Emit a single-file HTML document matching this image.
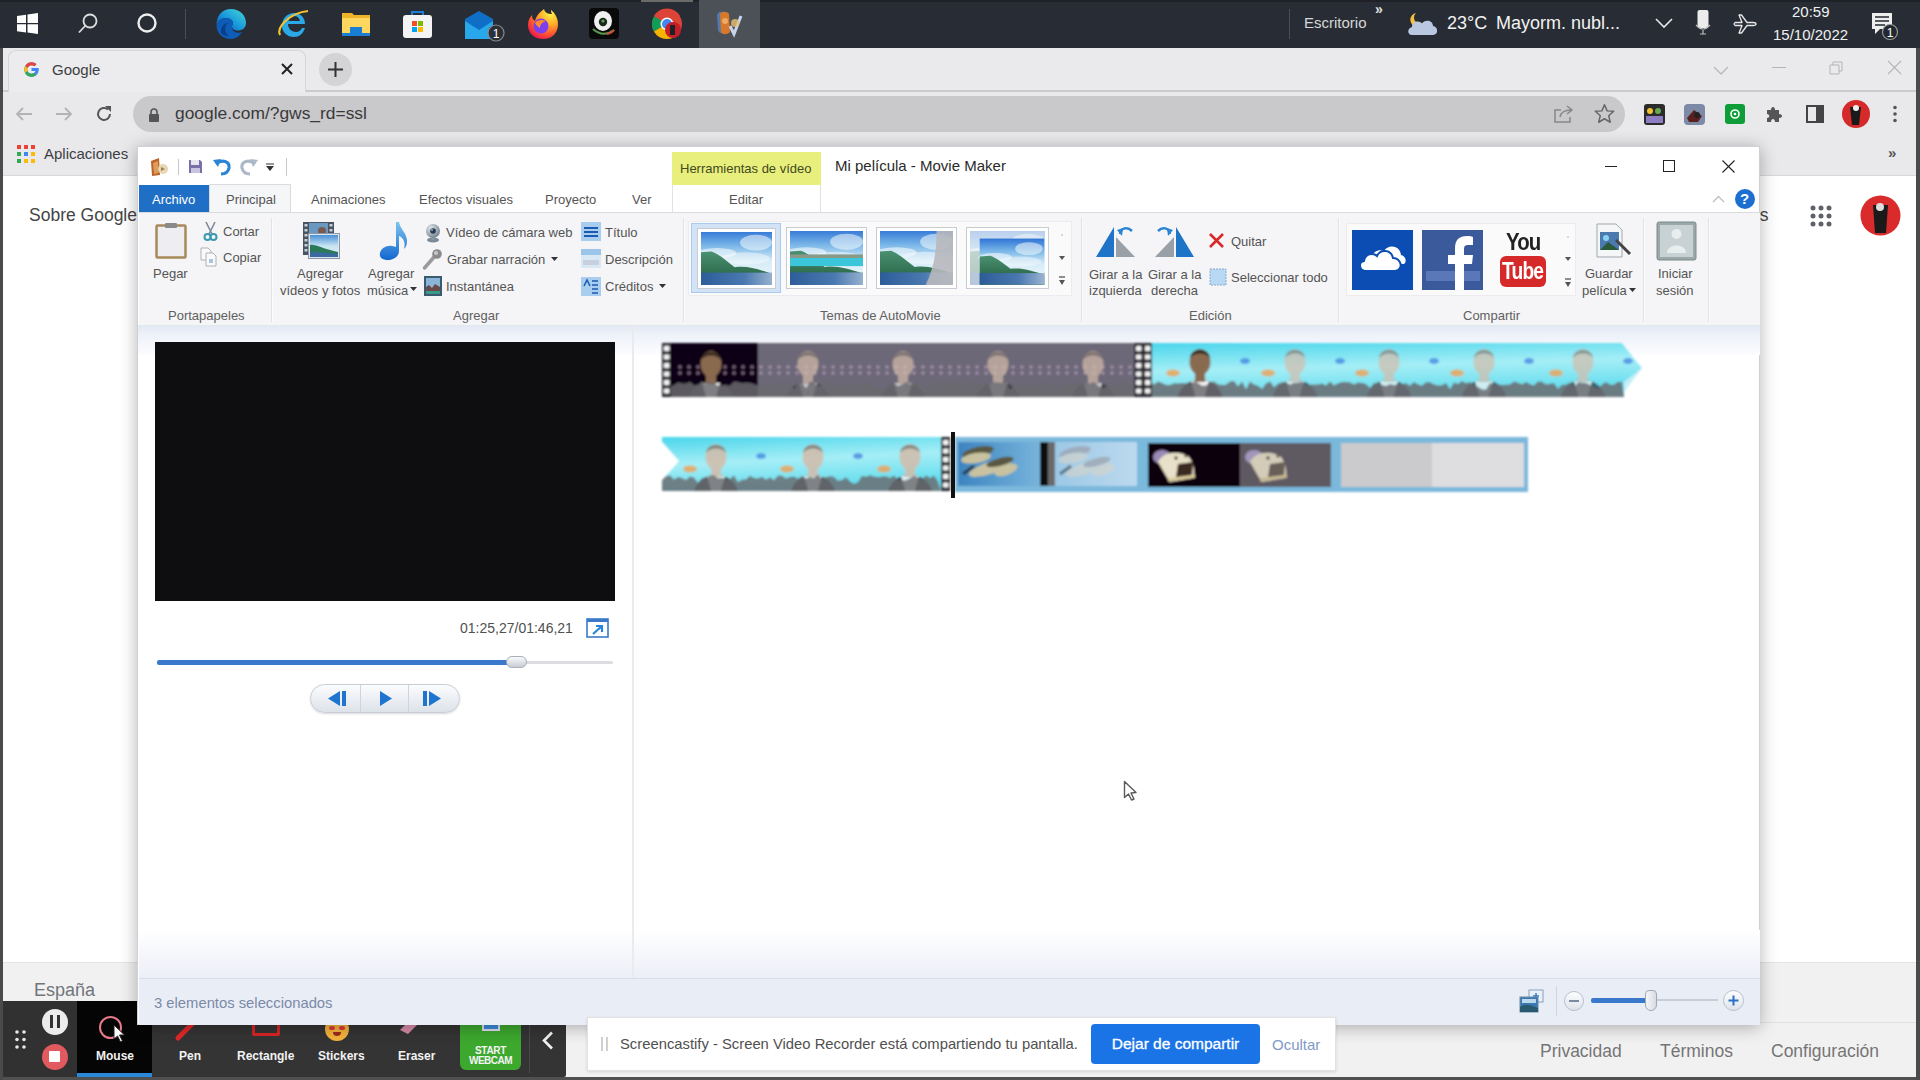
<!DOCTYPE html>
<html><head><meta charset="utf-8">
<style>
*{margin:0;padding:0;box-sizing:border-box}
html,body{width:1920px;height:1080px;overflow:hidden;background:#fff;font-family:"Liberation Sans",sans-serif;position:relative}
.a{position:absolute}
.t{position:absolute;white-space:nowrap;line-height:1}
svg{position:absolute;overflow:visible}
#tb{left:0;top:0;width:1920px;height:48px;background:#282d35}
#tabs{left:0;top:48px;width:1920px;height:44px;background:#eae9ec;border-bottom:2px solid #cbcacd}
#tool{left:0;top:92px;width:1920px;height:44px;background:#e9e8eb}
#bm{left:0;top:136px;width:1920px;height:40px;background:#e9e8eb;border-bottom:1px solid #d8d8da}
#page{left:0;top:176px;width:1920px;height:904px;background:#fff}
#foot{left:0;top:962px;width:1920px;height:118px;background:#f2f1f2;border-top:1px solid #e4e4e4}
#mm{left:137px;top:146px;width:1623px;height:879px;border:1px solid #d0d0d4;background:#fff;box-shadow:0 2px 16px rgba(0,0,0,.30)}
.th{background:linear-gradient(#2a70c8 0%,#7ab8e8 18%,#d8ecf8 38%,#c8e4f0 48%,#3a8a60 58%,#2a6a58 68%,#3a78b8 78%,#6aa0d0 90%,#a8c8e8 100%);border:3px solid #fff;box-shadow:0 0 0 1px #c8ccd2}
.rb{font-family:"Liberation Sans",sans-serif;font-size:12.5px;color:#505050}
.rb[style*="color:#444"]{color:#545454 !important}
</style></head><body>
<!-- google page -->
<div id="page" class="a"></div>
<div class="t" style="left:29px;top:207px;font-size:17.5px;color:#454545">Sobre Google</div>
<div class="t" style="left:1750px;top:207px;font-size:17.5px;color:#454545">es</div>
<div id="foot" class="a"></div>
<div class="a" style="left:0;top:1022px;width:1920px;height:1px;background:#e0e0e0"></div>
<div class="t" style="left:34px;top:981px;font-size:18px;color:#70757a">España</div>
<div class="t" style="left:1540px;top:1043px;font-size:17.5px;color:#757575">Privacidad</div>
<div class="t" style="left:1660px;top:1043px;font-size:17.5px;color:#757575">Términos</div>
<div class="t" style="left:1771px;top:1043px;font-size:17.5px;color:#757575">Configuración</div>
<!-- screen edges -->

<!-- TASKBAR -->
<div id="tb" class="a">
  <div class="a" style="left:0;top:0;width:1920px;height:2px;background:#1e2228"></div>
  <div class="a" style="left:699px;top:0;width:61px;height:48px;background:#4c5158"></div><div class="a" style="left:641px;top:0;width:52px;height:2px;background:#6a6a6a"></div>
  <!-- win logo -->
  <svg style="left:17px;top:13px" width="21" height="21" viewBox="0 0 21 21"><path d="M0 3 L9 1.7 V10 H0Z M10.5 1.5 L21 0 V10 H10.5Z M0 11.2 H9 V19.5 L0 18.2Z M10.5 11.2 H21 V21 L10.5 19.6Z" fill="#fff"/></svg>
  <!-- search -->
  <svg style="left:76px;top:11px" width="24" height="24" viewBox="0 0 24 24"><circle cx="14" cy="10" r="6.5" fill="none" stroke="#ddd" stroke-width="1.8"/><path d="M9.5 14.5 L3 21.5" stroke="#ddd" stroke-width="1.8"/></svg>
  <!-- cortana -->
  <svg style="left:136px;top:12px" width="22" height="22" viewBox="0 0 22 22"><circle cx="11" cy="11" r="8.5" fill="none" stroke="#eee" stroke-width="2.4"/></svg>
  <div class="a" style="left:185px;top:9px;width:1px;height:30px;background:#4a4f57"></div>
  <!-- edge -->
  <svg style="left:215px;top:8px" width="32" height="32" viewBox="0 0 32 32"><defs><linearGradient id="eg" x1="0" y1="1" x2="1" y2="0"><stop offset="0" stop-color="#0a4ea0"/><stop offset=".45" stop-color="#1796dc"/><stop offset=".8" stop-color="#35c1d8"/><stop offset="1" stop-color="#5ed68a"/></linearGradient></defs><path d="M16 1 C25 1 31 7.5 31 15 C31 20 27 22.5 23 22.5 C19 22.5 17 20.5 17 18.5 C17 17 18 16.5 18 15 C18 12 14 10 11 10 C6 10 2 14 1.5 18 C1 8 7 1 16 1Z" fill="url(#eg)"/><path d="M1.5 18 C2 14 6 10 11 10 C14 10 18 12 18 15 C18 16.5 17 17 17 18.5 C17 23 21 26 27 24 C24 29 20 31 16 31 C8 31 2 26 1.5 18Z" fill="#0c5cb8"/><path d="M6 24 C6 19 9 15 13 15 C9 18 9 24 14 28 C10 28 6 26 6 24Z" fill="#0a3f86"/></svg>
  <!-- IE -->
  <svg style="left:276px;top:7px" width="34" height="34" viewBox="0 0 34 34"><path d="M6 19 C6 11 12 6 18 6 C25 6 29 11 29 17 L12 17 C12 22 16 25 20 25 C23 25 25 23 26 21 L29 21 C27 27 23 30 18 30 C11 30 6 25 6 19Z M12.5 14 L24 14 C23 10 20.5 9 18 9 C15 9 13 11 12.5 14Z" fill="#2aa8e8"/><path d="M4 28 C0 20 14 6 32 4" fill="none" stroke="#f5c22c" stroke-width="2.2"/></svg>
  <!-- explorer -->
  <svg style="left:341px;top:10px" width="30" height="28" viewBox="0 0 30 28"><path d="M1 3 H11 L13 5 H29 V25 H1Z" fill="#f0b429"/><path d="M1 8 H29 V25 H1Z" fill="#ffd75e"/><rect x="9" y="17" width="12" height="6" fill="#1a7fd4"/><rect x="1" y="23" width="28" height="3" fill="#1a7fd4"/></svg>
  <!-- store -->
  <svg style="left:402px;top:8px" width="31" height="31" viewBox="0 0 31 31"><path d="M10 7 V4 H21 V7" fill="none" stroke="#1e7fd8" stroke-width="2"/><rect x="1" y="7" width="29" height="23" rx="3" fill="#f4f4f4"/><rect x="10" y="13" width="5" height="5" fill="#f25022"/><rect x="16" y="13" width="5" height="5" fill="#7fba00"/><rect x="10" y="19" width="5" height="5" fill="#00a4ef"/><rect x="16" y="19" width="5" height="5" fill="#ffb900"/></svg>
  <!-- mail -->
  <svg style="left:463px;top:9px" width="44" height="36" viewBox="0 0 44 36"><path d="M2 10 L16 2 L30 10 V30 H2Z" fill="#0f6fc6"/><path d="M2 12 L16 21 L30 12 V30 H2Z" fill="#28a8ea"/><circle cx="33" cy="24" r="8" fill="#2b2f36" stroke="#888" stroke-width="1.2"/><text x="33" y="29" font-size="12" fill="#fff" text-anchor="middle" style="font-family:'Liberation Sans'">1</text></svg>
  <!-- firefox -->
  <svg style="left:527px;top:8px" width="32" height="32" viewBox="0 0 32 32"><defs><radialGradient id="ff" cx=".75" cy=".15" r=".95"><stop offset="0" stop-color="#fff14a"/><stop offset=".35" stop-color="#ffb42a"/><stop offset=".7" stop-color="#ff5a2e"/><stop offset="1" stop-color="#e8174f"/></radialGradient></defs><path d="M16 31 C7 31 1 25 1 17 C1 12 3 9 5 7 C5 10 6 12 8 13 C9 8 13 4 17 1 C18 5 21 6 25 6 C24 4 24 3 24 2 C28 5 31 10 31 16 C31 25 25 31 16 31Z" fill="url(#ff)"/><circle cx="14" cy="18" r="7.5" fill="#7b3ff0"/><path d="M8 15 C10 12 15 11 19 13 C16 14 13 16 13 20 C11 19 9 17 8 15Z" fill="#ff8a2a"/></svg>
  <!-- webcam app -->
  <svg style="left:589px;top:8px" width="30" height="31" viewBox="0 0 30 31"><rect x="0" y="0" width="30" height="31" rx="4" fill="#0a0a0a"/><ellipse cx="14" cy="13" rx="9" ry="10" fill="#f0f0f0"/><circle cx="14" cy="14" r="4.2" fill="#1a2a1a"/><circle cx="14" cy="13" r="1.6" fill="#6aa060"/><path d="M4 21 Q14 30 25 22" stroke="#5a9a4a" stroke-width="2" fill="none"/><path d="M18 26 Q23 25 25 22" stroke="#d84a3a" stroke-width="2" fill="none"/></svg>
  <!-- chrome -->
  <svg style="left:651px;top:8px" width="32" height="32" viewBox="0 0 32 32"><circle cx="16" cy="16" r="15" fill="#db4437"/><path d="M16 16 L3 23.5 A15 15 0 0 1 3.5 8 Z" fill="#0f9d58"/><path d="M16 16 L29 23.5 A15 15 0 0 1 3 23.5Z" fill="#f4b400"/><path d="M16 16 L3 8 A15 15 0 0 1 29 8 Z" fill="#db4437"/><circle cx="16" cy="16" r="6.5" fill="#fff"/><circle cx="16" cy="16" r="5" fill="#4285f4"/><circle cx="22" cy="22" r="8" fill="#c41e2a"/><rect x="19" y="17" width="5" height="10" fill="#222"/></svg>
  <!-- movie maker -->
  <svg style="left:712px;top:8px" width="34" height="32" viewBox="0 0 34 32"><path d="M5 8 C5 4 9 3 12 4 L14 24 C11 26 7 26 6 22Z" fill="#5a8ad0" opacity=".7"/><path d="M8 6 C10 3 15 3 17 6 L18 24 C15 27 10 27 9 24Z" fill="#d8782a"/><circle cx="13" cy="13" r="3" fill="#f0a860"/><path d="M18 18 L22 26 L29 8" fill="none" stroke="#c8d4e8" stroke-width="3"/><circle cx="23" cy="15" r="4" fill="#e8c070" opacity=".8"/></svg>
  
  <!-- right side -->
  <div class="a" style="left:1289px;top:9px;width:1px;height:30px;background:#4a4f57"></div>
  <div class="t" style="left:1304px;top:15px;font-size:15px;color:#d7d7d7">Escritorio</div>
  <div class="t" style="left:1375px;top:2px;font-size:14px;color:#e0e0e0;font-weight:bold">»</div>
  <svg style="left:1406px;top:9px" width="34" height="30" viewBox="0 0 34 30"><path d="M10 4 A7 7 0 1 0 18 13 A6 6 0 0 1 10 4Z" fill="#f6c23e"/><path d="M6 26 C1 26 1 19 6 18 C6 12 14 11 16 15 C18 10 27 11 27 17 C32 17 33 26 27 26Z" fill="#b9c8e0"/></svg>
  <div class="t" style="left:1447px;top:14px;font-size:18px;color:#f2f2f2">23°C</div>
  <div class="t" style="left:1496px;top:14px;font-size:18px;color:#f2f2f2">Mayorm. nubl...</div>
  <svg style="left:1655px;top:17px" width="18" height="12" viewBox="0 0 18 12"><path d="M1 2 L9 10 L17 2" fill="none" stroke="#e6e6e6" stroke-width="1.6"/></svg>
  <svg style="left:1695px;top:9px" width="16" height="26" viewBox="0 0 16 26"><rect x="2.5" y="1" width="11" height="18" rx="2" fill="#ececec"/><path d="M1 16 Q8 24 15 16 M8 21 V25 M5 25 H11" stroke="#bbb" stroke-width="1.2" fill="none"/></svg>
  <svg style="left:1733px;top:12px" width="24" height="24" viewBox="0 0 24 24"><path d="M2 10.5 L9 10.5 L6 3 L8.5 3 L14 10.5 L20 10.5 C22 10.5 23 11.2 23 12 C23 12.8 22 13.5 20 13.5 L14 13.5 L8.5 21 L6 21 L9 13.5 L2 13.5 L1 12Z" fill="none" stroke="#e8e8e8" stroke-width="1.3" stroke-linejoin="round"/></svg>
  <div class="t" style="left:1792px;top:4px;font-size:15px;color:#f0f0f0">20:59</div>
  <div class="t" style="left:1773px;top:27px;font-size:15px;color:#f0f0f0">15/10/2022</div>
  <svg style="left:1870px;top:12px" width="34" height="30" viewBox="0 0 34 30"><path d="M2 1 H22 V17 H10 L5 22 V17 H2Z" fill="#eee"/><path d="M5 5 H19 M5 9 H19 M5 13 H15" stroke="#222831" stroke-width="1.5"/><circle cx="20" cy="20" r="7.5" fill="#222831" stroke="#999" stroke-width="1.2"/><text x="20" y="25" font-size="12" fill="#fff" text-anchor="middle" style="font-family:'Liberation Sans'">1</text></svg>
</div>

<!-- CHROME -->
<div id="tabs" class="a">
  <div class="a" style="left:8px;top:2px;width:298px;height:44px;background:#ecebee;border-radius:8px 8px 0 0;border:1px solid #d6d5d8;border-bottom:none"></div>
  <svg style="left:23px;top:13px" width="17" height="17" viewBox="0 0 48 48"><path d="M43.6 20H24v8.5h11.2C34 33 29.6 36 24 36c-6.6 0-12-5.4-12-12s5.4-12 12-12c3 0 5.8 1.1 7.9 3l6-6C34.2 5.5 29.3 3.5 24 3.5 12.7 3.5 3.5 12.7 3.5 24S12.7 44.5 24 44.5 44.5 36 44.5 24c0-1.4-.1-2.7-.4-4z" fill="#4285f4"/><path d="M6.3 14.7l7 5.1C15.1 15.2 19.2 12 24 12c3 0 5.8 1.1 7.9 3l6-6C34.2 5.5 29.3 3.5 24 3.5c-7.8 0-14.6 4.4-17.7 11.2z" fill="#ea4335"/><path d="M24 44.5c5.2 0 10-2 13.6-5.2l-6.6-5.4C29 35.2 26.6 36 24 36c-5.6 0-10-3-11.2-7.5l-7 5.4C9 40 16 44.5 24 44.5z" fill="#34a853"/><path d="M6 33.5C4.4 30.5 3.5 27.3 3.5 24s.9-6.5 2.8-9.3l7 5.1C12.5 21 12 22.5 12 24s.5 3 1.2 4.4z" fill="#fbbc05"/></svg>
  <div class="t" style="left:52px;top:14px;font-size:15px;color:#3c4043">Google</div>
  <svg style="left:281px;top:15px" width="12" height="12" viewBox="0 0 12 12"><path d="M1 1 L11 11 M11 1 L1 11" stroke="#222" stroke-width="2"/></svg>
  <div class="a" style="left:319px;top:5px;width:33px;height:33px;border-radius:50%;background:#d4d3d6"></div>
  <svg style="left:327px;top:13px" width="17" height="17" viewBox="0 0 17 17"><path d="M8.5 1 V16 M1 8.5 H16" stroke="#333" stroke-width="2"/></svg>
  <svg style="left:1713px;top:18px" width="16" height="9" viewBox="0 0 16 9"><path d="M1 1 L8 8 L15 1" fill="none" stroke="#b8b8b8" stroke-width="1.3"/></svg>
  <div class="a" style="left:1772px;top:19px;width:14px;height:1px;background:#b5b5b5"></div>
  <svg style="left:1829px;top:13px" width="14" height="14" viewBox="0 0 14 14"><path d="M1 4 H10 V13 H1Z M4 4 V1 H13 V10 H10" fill="none" stroke="#b5b5b5" stroke-width="1"/></svg>
  <svg style="left:1887px;top:12px" width="15" height="15" viewBox="0 0 15 15"><path d="M1 1 L14 14 M14 1 L1 14" stroke="#b5b5b5" stroke-width="1.1"/></svg>
</div>
<div id="tool" class="a">
  <svg style="left:15px;top:14px" width="18" height="16" viewBox="0 0 18 16"><path d="M17 8 H2 M8 2 L2 8 L8 14" fill="none" stroke="#b3b3b3" stroke-width="1.8"/></svg>
  <svg style="left:55px;top:14px" width="18" height="16" viewBox="0 0 18 16"><path d="M1 8 H16 M10 2 L16 8 L10 14" fill="none" stroke="#b3b3b3" stroke-width="1.8"/></svg>
  <svg style="left:95px;top:13px" width="18" height="18" viewBox="0 0 18 18"><path d="M15 9 A6 6 0 1 1 13 4.5" fill="none" stroke="#555" stroke-width="2"/><path d="M10 1 H16 V7Z" fill="#555"/></svg>
  <div class="a" style="left:133px;top:4px;width:1492px;height:36px;border-radius:18px;background:#c9c8cb"></div>
  <svg style="left:148px;top:16px" width="12" height="14" viewBox="0 0 12 14"><path d="M3 6 V4 A3 3 0 0 1 9 4 V6" fill="none" stroke="#555" stroke-width="1.6"/><rect x="1" y="6" width="10" height="8" rx="1" fill="#555"/></svg>
  <div class="t" style="left:175px;top:13px;font-size:17.4px;color:#3a3a3a">google.com/?gws_rd=ssl</div>
  <svg style="left:1553px;top:12px" width="22" height="20" viewBox="0 0 22 20"><path d="M8 6 H2 V18 H17 V13" fill="none" stroke="#888" stroke-width="1.5"/><path d="M7 13 C8 8 12 6 18 6 M14 2 L19 6 L14 10" fill="none" stroke="#888" stroke-width="1.5"/></svg>
  <svg style="left:1594px;top:11px" width="21" height="21" viewBox="0 0 24 24"><path d="M12 2 L15 9 L22.5 9.5 L16.8 14.5 L18.6 22 L12 18 L5.4 22 L7.2 14.5 L1.5 9.5 L9 9Z" fill="none" stroke="#666" stroke-width="1.7" stroke-linejoin="round"/></svg>
  <!-- extensions -->
  <svg style="left:1644px;top:12px" width="21" height="21" viewBox="0 0 21 21"><rect width="21" height="21" rx="3" fill="#2b2b2b"/><circle cx="6" cy="7" r="3" fill="#f1c232"/><circle cx="14" cy="7" r="3" fill="#6aa84f"/><rect x="2" y="12" width="17" height="7" fill="#8e7cc3"/></svg>
  <svg style="left:1684px;top:12px" width="21" height="21" viewBox="0 0 21 21"><rect width="21" height="21" rx="4" fill="#7d8aa5"/><path d="M3 14 L10 6 L18 12 L14 18 L5 18Z" fill="#5a2020"/><circle cx="13" cy="11" r="3" fill="#222"/></svg>
  <svg style="left:1725px;top:12px" width="20" height="20" viewBox="0 0 20 20"><rect width="20" height="20" rx="3" fill="#0f9d3a"/><circle cx="10" cy="10" r="4" fill="none" stroke="#fff" stroke-width="1.6"/><circle cx="10" cy="10" r="1.3" fill="#fff"/></svg>
  <svg style="left:1765px;top:12px" width="20" height="20" viewBox="0 0 20 20"><path d="M2 6 H6 C6 2 10 2 10 6 H14 V10 C18 10 18 14 14 14 V18 H10 C10 14 6 14 6 18 H2 V14 C5 14 5 10 2 10Z" fill="#555"/></svg>
  <svg style="left:1806px;top:13px" width="18" height="18" viewBox="0 0 18 18"><rect x="1" y="1" width="16" height="16" fill="none" stroke="#444" stroke-width="2"/><rect x="10" y="1" width="7" height="16" fill="#444"/></svg>
  <svg style="left:1841px;top:7px" width="30" height="30" viewBox="0 0 30 30"><circle cx="15" cy="15" r="14" fill="#d62a2a"/><path d="M9 8 H20 L18 26 H11Z" fill="#1a1a1a"/><circle cx="15" cy="9" r="3" fill="#eee"/></svg>
  <svg style="left:1892px;top:13px" width="6" height="18" viewBox="0 0 6 18"><circle cx="3" cy="2.5" r="1.8" fill="#555"/><circle cx="3" cy="9" r="1.8" fill="#555"/><circle cx="3" cy="15.5" r="1.8" fill="#555"/></svg>
</div>
<div id="bm" class="a">
  <svg style="left:17px;top:9px" width="18" height="18" viewBox="0 0 18 18"><rect x="0" y="0" width="4" height="4" fill="#ea4335"/><rect x="7" y="0" width="4" height="4" fill="#ea4335"/><rect x="14" y="0" width="4" height="4" fill="#ea4335"/><rect x="0" y="7" width="4" height="4" fill="#34a853"/><rect x="7" y="7" width="4" height="4" fill="#4285f4"/><rect x="14" y="7" width="4" height="4" fill="#fbbc05"/><rect x="0" y="14" width="4" height="4" fill="#34a853"/><rect x="7" y="14" width="4" height="4" fill="#fbbc05"/><rect x="14" y="14" width="4" height="4" fill="#fbbc05"/></svg>
  <div class="t" style="left:44px;top:10px;font-size:15px;color:#3c4043">Aplicaciones</div>
  <div class="t" style="left:1888px;top:9px;font-size:15px;color:#555;font-weight:bold">»</div>
</div>
<!-- google header icons right -->
<svg style="left:1810px;top:205px" width="22" height="22" viewBox="0 0 22 22"><g fill="#5f6368"><circle cx="3" cy="3" r="2.5"/><circle cx="11" cy="3" r="2.5"/><circle cx="19" cy="3" r="2.5"/><circle cx="3" cy="11" r="2.5"/><circle cx="11" cy="11" r="2.5"/><circle cx="19" cy="11" r="2.5"/><circle cx="3" cy="19" r="2.5"/><circle cx="11" cy="19" r="2.5"/><circle cx="19" cy="19" r="2.5"/></g></svg>
<svg style="left:1860px;top:195px" width="41" height="41" viewBox="0 0 41 41"><circle cx="20.5" cy="20.5" r="20" fill="#d92b2b"/><path d="M13 10 H28 L26 38 H15Z" fill="#1a1a1a"/><circle cx="20" cy="12" r="4" fill="#ddd"/></svg>


<!-- screencastify toolbar -->
<div class="a" style="left:3px;top:1001px;width:563px;height:76px;background:#343434;border-radius:2px"></div>
<div class="a" style="left:3px;top:1001px;width:74px;height:76px;background:#313131"></div>
<svg style="left:14px;top:1029px" width="14" height="22" viewBox="0 0 14 22"><g fill="#e8e8e8"><circle cx="3" cy="3" r="1.8"/><circle cx="10" cy="3" r="1.8"/><circle cx="3" cy="10.5" r="1.8"/><circle cx="10" cy="10.5" r="1.8"/><circle cx="3" cy="18" r="1.8"/><circle cx="10" cy="18" r="1.8"/></g></svg>
<div class="a" style="left:42px;top:1009px;width:26px;height:26px;border-radius:50%;background:#ececec"></div>
<div class="a" style="left:50px;top:1015px;width:3px;height:13px;background:#333"></div>
<div class="a" style="left:57px;top:1015px;width:3px;height:13px;background:#333"></div>
<div class="a" style="left:42px;top:1044px;width:26px;height:26px;border-radius:50%;background:#e05a5f"></div>
<div class="a" style="left:49px;top:1051px;width:11px;height:11px;background:#fff;border-radius:1px"></div>
<div class="a" style="left:77px;top:1001px;width:75px;height:76px;background:#050505"></div>
<div class="a" style="left:77px;top:1073px;width:75px;height:4px;background:#2a88d8"></div>
<div class="a" style="left:99px;top:1016px;width:23px;height:23px;border-radius:50%;border:2.5px solid #e87a8a"></div>
<svg style="left:113px;top:1024px" width="13" height="19" viewBox="0 0 13 19"><path d="M1 1 L1 15 L4.5 12 L7.5 18 L9.5 17 L6.5 11 L11.5 11Z" fill="#fff" stroke="#222" stroke-width="1"/></svg>
<div class="t" style="left:96px;top:1050px;font-size:12px;font-weight:bold;color:#f2f2f2">Mouse</div>
<svg style="left:175px;top:1019px" width="22" height="22" viewBox="0 0 22 22"><path d="M3 19 L17 5" stroke="#e0282a" stroke-width="5" stroke-linecap="round"/></svg>
<div class="t" style="left:179px;top:1050px;font-size:12px;font-weight:bold;color:#f2f2f2">Pen</div>
<div class="a" style="left:252px;top:1012px;width:28px;height:24px;border:3px solid #d92424;border-radius:2px"></div>
<div class="t" style="left:237px;top:1050px;font-size:12px;font-weight:bold;color:#f2f2f2">Rectangle</div>
<div class="a" style="left:325px;top:1017px;width:24px;height:24px;border-radius:50%;background:#f4b43c"></div>
<div class="a" style="left:329px;top:1026px;width:6px;height:4px;border-radius:50%;background:#e0383a"></div><div class="a" style="left:339px;top:1026px;width:6px;height:4px;border-radius:50%;background:#e0383a"></div><div class="a" style="left:333px;top:1032px;width:8px;height:4px;border-radius:0 0 5px 5px;background:#a02a1a"></div>
<div class="t" style="left:318px;top:1050px;font-size:12px;font-weight:bold;color:#f2f2f2">Stickers</div>
<svg style="left:398px;top:1018px" width="24" height="18" viewBox="0 0 24 18"><path d="M2 12 L12 2 L20 6 L10 16Z" fill="#d88aa8"/></svg>
<div class="t" style="left:398px;top:1050px;font-size:12px;font-weight:bold;color:#f2f2f2">Eraser</div>
<div class="a" style="left:460px;top:1012px;width:61px;height:58px;border-radius:6px;background:#3da82e"></div>
<div class="a" style="left:482px;top:1017px;width:18px;height:14px;background:#3a8ad8;border:2px solid #dde"></div>
<div class="t" style="left:460px;top:1046px;width:61px;text-align:center;font-size:10px;font-weight:bold;color:#f4f4f4;letter-spacing:-.3px">START</div>
<div class="t" style="left:460px;top:1056px;width:61px;text-align:center;font-size:10px;font-weight:bold;color:#f4f4f4;letter-spacing:-.5px">WEBCAM</div>
<div class="a" style="left:529px;top:1005px;width:1px;height:68px;background:#4a4a4a"></div>
<svg style="left:541px;top:1031px" width="13" height="19" viewBox="0 0 13 19"><path d="M11 1.5 L3 9.5 L11 17.5" fill="none" stroke="#f2f2f2" stroke-width="2.6"/></svg>
<!-- MOVIE MAKER -->
<div id="mm" class="a"></div>
<!-- title bar -->
<svg style="left:149px;top:157px" width="20" height="20" viewBox="0 0 20 20"><path d="M2 4 L10 1 L11 18 L3 19Z" fill="#b8642a"/><path d="M4 6 L9 4 L9.5 16 L5 17Z" fill="#e29a5a"/><circle cx="14" cy="12" r="5" fill="#e7d6b0"/><path d="M12 10 L16 12 L12 14Z" fill="#9a8060"/></svg>
<div class="a" style="left:178px;top:159px;width:1px;height:16px;background:#c8c8c8"></div>
<svg style="left:188px;top:159px" width="15" height="15" viewBox="0 0 15 15"><path d="M1 1 H12 L14 3 V14 H1Z" fill="#7a6fa8"/><rect x="3" y="1" width="8" height="5" fill="#e8e6f0"/><rect x="3" y="9" width="9" height="5" fill="#c9c4de"/></svg>
<svg style="left:213px;top:157px" width="19" height="19" viewBox="0 0 19 19"><path d="M3 7 C9 2 17 4 16 11 C15 16 11 17 8 17" fill="none" stroke="#2b84d4" stroke-width="3.2"/><path d="M0 3 L8 2 L5 10Z" fill="#2b84d4"/></svg>
<svg style="left:239px;top:157px" width="19" height="19" viewBox="0 0 19 19"><path d="M16 7 C10 2 2 4 3 11 C4 16 8 17 11 17" fill="none" stroke="#aab8c8" stroke-width="3.2"/><path d="M19 3 L11 2 L14 10Z" fill="#aab8c8"/></svg>
<svg style="left:265px;top:162px" width="10" height="10" viewBox="0 0 10 10"><path d="M1 2 H9" stroke="#333" stroke-width="1"/><path d="M1 4 L9 4 L5 9Z" fill="#333"/></svg>
<div class="a" style="left:286px;top:158px;width:1px;height:18px;background:#c8c8c8"></div>
<div class="a" style="left:672px;top:152px;width:149px;height:33px;background:#e9ef7d"></div>
<div class="t rb" style="left:680px;top:162px;font-size:13px;color:#3f4a20">Herramientas de vídeo</div>
<div class="t" style="left:835px;top:158px;font-size:15px;color:#2b2b2b">Mi película - Movie Maker</div>
<div class="a" style="left:1605px;top:166px;width:12px;height:1px;background:#222"></div>
<div class="a" style="left:1663px;top:160px;width:12px;height:12px;border:1px solid #222"></div>
<svg style="left:1722px;top:160px" width="13" height="13" viewBox="0 0 13 13"><path d="M0.5 0.5 L12.5 12.5 M12.5 0.5 L0.5 12.5" stroke="#222" stroke-width="1.1"/></svg>

<!-- tabs row -->
<div class="a" style="left:139px;top:185px;width:70px;height:27px;background:#1f6fc6"></div>
<div class="t rb" style="left:152px;top:193px;font-size:13px;color:#fff">Archivo</div>
<div class="a" style="left:209px;top:184px;width:82px;height:29px;background:#f5f6f7;border:1px solid #dadbdc;border-bottom:none"></div>
<div class="t rb" style="left:226px;top:193px;font-size:13px;color:#444">Principal</div>
<div class="t rb" style="left:311px;top:193px;font-size:13px;color:#444">Animaciones</div>
<div class="t rb" style="left:419px;top:193px;font-size:13px;color:#444">Efectos visuales</div>
<div class="t rb" style="left:545px;top:193px;font-size:13px;color:#444">Proyecto</div>
<div class="t rb" style="left:632px;top:193px;font-size:13px;color:#444">Ver</div>
<div class="a" style="left:672px;top:185px;width:1px;height:27px;background:#e2e2e2"></div>
<div class="a" style="left:820px;top:185px;width:1px;height:27px;background:#e2e2e2"></div>
<div class="t rb" style="left:729px;top:193px;font-size:13px;color:#444">Editar</div>
<svg style="left:1712px;top:195px" width="13" height="8" viewBox="0 0 13 8"><path d="M1 7 L6.5 1.5 L12 7" fill="none" stroke="#c0c0c0" stroke-width="1.3"/></svg>
<div class="a" style="left:1735px;top:189px;width:20px;height:20px;border-radius:50%;background:#1c6fd1"></div>
<div class="t" style="left:1740px;top:191px;font-size:15px;font-weight:bold;color:#fff">?</div>
<!-- ribbon -->
<div class="a" style="left:139px;top:212px;width:1621px;height:113px;background:#f5f5f7;border-top:1px solid #dadbdc"></div>
<div class="a" style="left:138px;top:325px;width:1622px;height:30px;background:linear-gradient(#e2e8f3,#eef2f9 35%,#fdfdff)"></div>
<div class="a" style="left:271px;top:218px;width:1px;height:104px;background:#e2e2e6"></div><div class="a" style="left:272px;top:218px;width:1px;height:104px;background:#fbfbfc"></div>
<div class="a" style="left:683px;top:218px;width:1px;height:104px;background:#e2e2e6"></div><div class="a" style="left:684px;top:218px;width:1px;height:104px;background:#fbfbfc"></div>
<div class="a" style="left:1081px;top:218px;width:1px;height:104px;background:#e2e2e6"></div><div class="a" style="left:1082px;top:218px;width:1px;height:104px;background:#fbfbfc"></div>
<div class="a" style="left:1338px;top:218px;width:1px;height:104px;background:#e2e2e6"></div><div class="a" style="left:1339px;top:218px;width:1px;height:104px;background:#fbfbfc"></div>
<div class="a" style="left:1643px;top:218px;width:1px;height:104px;background:#e2e2e6"></div><div class="a" style="left:1644px;top:218px;width:1px;height:104px;background:#fbfbfc"></div>
<div class="a" style="left:1708px;top:218px;width:1px;height:104px;background:#e2e2e6"></div><div class="a" style="left:1709px;top:218px;width:1px;height:104px;background:#fbfbfc"></div>
<div class="t rb" style="left:168px;top:309px;font-size:13px;color:#606060">Portapapeles</div>
<div class="t rb" style="left:453px;top:309px;font-size:13px;color:#606060">Agregar</div>
<div class="t rb" style="left:820px;top:309px;font-size:13px;color:#606060">Temas de AutoMovie</div>
<div class="t rb" style="left:1189px;top:309px;font-size:13px;color:#606060">Edición</div>
<div class="t rb" style="left:1463px;top:309px;font-size:13px;color:#606060">Compartir</div>
<!-- portapapeles -->
<svg style="left:155px;top:222px" width="32" height="37" viewBox="0 0 32 37"><rect x="1.5" y="3.5" width="29" height="32" rx="1" fill="#eeeef2" stroke="#a88a5a" stroke-width="2.5"/><rect x="10" y="1" width="12" height="5" rx="1" fill="#8a8a8a"/></svg>
<div class="t rb" style="left:153px;top:267px;font-size:13px;color:#444">Pegar</div>
<svg style="left:203px;top:221px" width="15" height="20" viewBox="0 0 15 20"><path d="M3 1 L9 13 M12 1 L6 13" stroke="#7a8a9a" stroke-width="1.6"/><circle cx="4.5" cy="16" r="3" fill="none" stroke="#3a9ab0" stroke-width="2"/><circle cx="10.5" cy="16" r="3" fill="none" stroke="#3a9ab0" stroke-width="2"/></svg>
<div class="t rb" style="left:223px;top:225px;font-size:13px;color:#444">Cortar</div>
<svg style="left:200px;top:247px" width="18" height="20" viewBox="0 0 18 20"><path d="M1 1 H8 L11 4 V13 H1Z" fill="#fafafa" stroke="#b0b0b0"/><path d="M6 6 H13 L16 9 V19 H6Z" fill="#fafafa" stroke="#b0b0b0"/><rect x="9" y="12" width="4" height="4" fill="#a8c4e0"/></svg>
<div class="t rb" style="left:223px;top:251px;font-size:13px;color:#444">Copiar</div>
<!-- agregar -->
<svg style="left:302px;top:221px" width="38" height="38" viewBox="0 0 38 38"><rect x="1" y="1" width="31" height="33" fill="#4a5460"/><g fill="#c8d0d8"><rect x="2.5" y="3" width="3" height="2.5"/><rect x="2.5" y="8" width="3" height="2.5"/><rect x="2.5" y="13" width="3" height="2.5"/><rect x="2.5" y="18" width="3" height="2.5"/><rect x="2.5" y="23" width="3" height="2.5"/><rect x="2.5" y="28" width="3" height="2.5"/><rect x="27.5" y="3" width="3" height="2.5"/><rect x="27.5" y="8" width="3" height="2.5"/></g><rect x="7" y="2" width="19" height="12" fill="#6a98c0"/><circle cx="20" cy="10" r="4" fill="#7a5a50"/><rect x="6.5" y="12.5" width="31" height="25" fill="#dde6ee" stroke="#8a98a8"/><defs><linearGradient id="fsk" x1="0" y1="0" x2="0" y2="1"><stop offset="0" stop-color="#4a90d8"/><stop offset=".5" stop-color="#c8e4f0"/><stop offset="1" stop-color="#e0f0f4"/></linearGradient></defs><rect x="8" y="14" width="28" height="22" fill="url(#fsk)"/><path d="M8 24 C14 23 20 28 36 31 V36 H8Z" fill="#2a7a58"/><path d="M8 31 C18 31 28 32 36 33 V36 H8Z" fill="#3a6aa0"/></svg>
<div class="t rb" style="left:297px;top:267px;font-size:13px;color:#444">Agregar</div>
<div class="t rb" style="left:280px;top:284px;font-size:13px;color:#444">vídeos y fotos</div>
<svg style="left:377px;top:221px" width="32" height="40" viewBox="0 0 32 40"><defs><linearGradient id="mn" x1="0" y1="0" x2="0" y2="1"><stop offset="0" stop-color="#7ac4ee"/><stop offset="1" stop-color="#1466d0"/></linearGradient></defs><path d="M19 1 L22 1 C23 8 30 12 30 20 C30 24 29 26 27 28 C28 24 28 20 25 17 C24 16 23 15 22 15 L22 30 C22 35 17 39 11 39 C5 39 2 36 3 32 C4 27 10 24 15 25 C17 25 18 26 19 26Z" fill="url(#mn)"/></svg>
<div class="t rb" style="left:368px;top:267px;font-size:13px;color:#444">Agregar</div>
<div class="t rb" style="left:367px;top:284px;font-size:13px;color:#444">música</div>
<svg style="left:410px;top:287px" width="7" height="5" viewBox="0 0 7 5"><path d="M0 0 H7 L3.5 4Z" fill="#333"/></svg>
<svg style="left:424px;top:223px" width="18" height="20" viewBox="0 0 18 20"><defs><radialGradient id="wc" cx=".35" cy=".3" r=".8"><stop offset="0" stop-color="#e0e6ea"/><stop offset="1" stop-color="#6a7a88"/></radialGradient></defs><ellipse cx="9" cy="17" rx="6" ry="2.5" fill="#7a8a98"/><rect x="7.5" y="12" width="3" height="5" fill="#8a98a4"/><circle cx="9" cy="8" r="7" fill="url(#wc)"/><circle cx="9" cy="8" r="2.8" fill="#2a3a50"/><circle cx="8" cy="7" r="1" fill="#8ab0d0"/></svg>
<div class="t rb" style="left:446px;top:226px;font-size:13px;color:#444">Vídeo de cámara web</div>
<svg style="left:422px;top:248px" width="21" height="22" viewBox="0 0 21 22"><path d="M2.5 20 L12.5 8.5" stroke="#9a9a9a" stroke-width="3.5" stroke-linecap="round"/><circle cx="15" cy="6" r="4.8" fill="#8a8a8a"/><circle cx="14" cy="5" r="2" fill="#c8c8c8"/></svg>
<div class="t rb" style="left:447px;top:253px;font-size:13px;color:#444">Grabar narración</div>
<svg style="left:551px;top:257px" width="7" height="5" viewBox="0 0 7 5"><path d="M0 0 H7 L3.5 4Z" fill="#333"/></svg>
<svg style="left:424px;top:276px" width="18" height="20" viewBox="0 0 18 20"><rect width="18" height="20" fill="#3a5a70"/><rect x="2" y="2" width="14" height="16" fill="#8ab4d8"/><path d="M2 18 L2 11 L5 9 L8 12 L11 8 L16 11 V18Z" fill="#6a4a4a"/><rect x="2" y="15" width="14" height="3" fill="#3a9a8a"/></svg>
<div class="t rb" style="left:446px;top:280px;font-size:13px;color:#444">Instantánea</div>
<svg style="left:581px;top:222px" width="20" height="19" viewBox="0 0 20 19"><rect width="20" height="19" fill="#a8cdef"/><path d="M3 6 H17 M3 10 H17 M3 14 H17" stroke="#1a5ab0" stroke-width="1.8"/></svg>
<div class="t rb" style="left:605px;top:226px;font-size:13px;color:#444">Título</div>
<svg style="left:581px;top:249px" width="20" height="19" viewBox="0 0 20 19"><rect width="20" height="19" fill="#d8e8f4"/><rect x="0" y="0" width="20" height="6" fill="#9cc4e8"/><rect x="2" y="11" width="16" height="5" fill="#c8d0e0"/></svg>
<div class="t rb" style="left:605px;top:253px;font-size:13px;color:#444">Descripción</div>
<svg style="left:581px;top:277px" width="20" height="19" viewBox="0 0 20 19"><rect width="20" height="19" fill="#a8cdef"/><path d="M3 9 L6 3 L9 9" stroke="#1a5ab0" stroke-width="1.5" fill="none"/><path d="M11 4 H17 M11 8 H17 M11 12 H17 M11 16 H17" stroke="#1a5ab0" stroke-width="1.6"/></svg>
<div class="t rb" style="left:605px;top:280px;font-size:13px;color:#444">Créditos</div>
<svg style="left:659px;top:284px" width="7" height="5" viewBox="0 0 7 5"><path d="M0 0 H7 L3.5 4Z" fill="#333"/></svg>


<!-- content area -->
<div class="a" style="left:139px;top:930px;width:1621px;height:48px;background:linear-gradient(#fff,#eceff7)"></div>
<div class="a" style="left:632px;top:326px;width:2px;height:652px;background:#ebebef"></div>
<div class="a" style="left:155px;top:342px;width:460px;height:259px;background:#0e0d10"></div>
<div class="t" style="left:460px;top:621px;font-size:14px;color:#505050">01:25,27/01:46,21</div>
<svg style="left:586px;top:618px" width="23" height="20" viewBox="0 0 23 20"><rect x="1" y="1" width="21" height="18" fill="#fff" stroke="#3a7ac8" stroke-width="1.6"/><rect x="1" y="1" width="21" height="3" fill="#3a7ac8"/><path d="M7 16 L16 8 M10 8 H16 V14" fill="none" stroke="#2a84d8" stroke-width="2.2"/></svg>
<div class="a" style="left:157px;top:661px;width:456px;height:3px;border-radius:2px;background:#dcdde0"></div>
<div class="a" style="left:157px;top:660px;width:356px;height:5px;border-radius:2px;background:#3a78cc"></div>
<div class="a" style="left:506px;top:656px;width:21px;height:12px;border-radius:6px;background:linear-gradient(#fafbfc,#c8ccd4);border:1px solid #a8b0b8"></div>
<div class="a" style="left:310px;top:684px;width:150px;height:29px;border-radius:15px;background:linear-gradient(#fbfcfd,#dde2ea);border:1px solid #c8cdd6;box-shadow:0 1px 2px rgba(0,0,0,.15)"></div>
<div class="a" style="left:360px;top:685px;width:1px;height:27px;background:#d0d4da"></div>
<div class="a" style="left:408px;top:685px;width:1px;height:27px;background:#d0d4da"></div>
<svg style="left:328px;top:691px" width="20" height="15" viewBox="0 0 20 15"><path d="M0 7.5 L12 0 V15Z" fill="#1f74d0"/><rect x="14" y="0" width="4" height="15" fill="#1f74d0"/></svg>
<svg style="left:379px;top:691px" width="14" height="15" viewBox="0 0 14 15"><path d="M1 0 L13 7.5 L1 15Z" fill="#1f74d0"/></svg>
<svg style="left:423px;top:691px" width="20" height="15" viewBox="0 0 20 15"><rect x="0" y="0" width="4" height="15" fill="#1f74d0"/><path d="M6 0 L18 7.5 L6 15Z" fill="#1f74d0"/></svg>
<!-- timeline -->
<svg style="left:0;top:0" width="1920" height="1080" viewBox="0 0 1920 1080"><defs><filter id="bl" x="-5%" y="-5%" width="110%" height="110%"><feGaussianBlur stdDeviation="1.1"/></filter><linearGradient id="cy" x1="0" y1="0" x2=".25" y2="1" spreadMethod="reflect"><stop offset="0" stop-color="#4ad6ec"/><stop offset=".5" stop-color="#a6eef6"/><stop offset="1" stop-color="#62dcee"/></linearGradient><clipPath id="c1"><path d="M662 343 H1622 L1642 368 L1624 392 V397 H662Z"/></clipPath><clipPath id="c2"><rect x="662" y="437" width="279" height="54"/></clipPath></defs><g filter="url(#bl)"><g clip-path="url(#c1)"><rect x="671" y="343" width="87" height="54" fill="#0d0612"/><rect x="758" y="343" width="376" height="54" fill="#6c6878"/><circle cx="680" cy="367" r="1.8" fill="#c8a8c8" opacity=".6"/><circle cx="680" cy="373" r="1.8" fill="#c8a8c8" opacity=".6"/><circle cx="689" cy="367" r="1.8" fill="#c8a8c8" opacity=".6"/><circle cx="689" cy="373" r="1.8" fill="#c8a8c8" opacity=".6"/><circle cx="698" cy="367" r="1.8" fill="#c8a8c8" opacity=".6"/><circle cx="698" cy="373" r="1.8" fill="#c8a8c8" opacity=".6"/><circle cx="707" cy="367" r="1.8" fill="#c8a8c8" opacity=".6"/><circle cx="707" cy="373" r="1.8" fill="#c8a8c8" opacity=".6"/><circle cx="716" cy="367" r="1.8" fill="#c8a8c8" opacity=".6"/><circle cx="716" cy="373" r="1.8" fill="#c8a8c8" opacity=".6"/><circle cx="725" cy="367" r="1.8" fill="#c8a8c8" opacity=".6"/><circle cx="725" cy="373" r="1.8" fill="#c8a8c8" opacity=".6"/><circle cx="734" cy="367" r="1.8" fill="#c8a8c8" opacity=".6"/><circle cx="734" cy="373" r="1.8" fill="#c8a8c8" opacity=".6"/><circle cx="743" cy="367" r="1.8" fill="#c8a8c8" opacity=".6"/><circle cx="743" cy="373" r="1.8" fill="#c8a8c8" opacity=".6"/><circle cx="752" cy="367" r="1.8" fill="#c8a8c8" opacity=".6"/><circle cx="752" cy="373" r="1.8" fill="#c8a8c8" opacity=".6"/><circle cx="761" cy="367" r="1.8" fill="#c8a8c8" opacity=".6"/><circle cx="761" cy="373" r="1.8" fill="#c8a8c8" opacity=".6"/><circle cx="770" cy="367" r="1.8" fill="#c8a8c8" opacity=".6"/><circle cx="770" cy="373" r="1.8" fill="#c8a8c8" opacity=".6"/><circle cx="779" cy="367" r="1.8" fill="#c8a8c8" opacity=".6"/><circle cx="779" cy="373" r="1.8" fill="#c8a8c8" opacity=".6"/><circle cx="788" cy="367" r="1.8" fill="#c8a8c8" opacity=".6"/><circle cx="788" cy="373" r="1.8" fill="#c8a8c8" opacity=".6"/><circle cx="797" cy="367" r="1.8" fill="#c8a8c8" opacity=".6"/><circle cx="797" cy="373" r="1.8" fill="#c8a8c8" opacity=".6"/><circle cx="806" cy="367" r="1.8" fill="#c8a8c8" opacity=".6"/><circle cx="806" cy="373" r="1.8" fill="#c8a8c8" opacity=".6"/><circle cx="815" cy="367" r="1.8" fill="#c8a8c8" opacity=".6"/><circle cx="815" cy="373" r="1.8" fill="#c8a8c8" opacity=".6"/><circle cx="824" cy="367" r="1.8" fill="#c8a8c8" opacity=".6"/><circle cx="824" cy="373" r="1.8" fill="#c8a8c8" opacity=".6"/><circle cx="833" cy="367" r="1.8" fill="#c8a8c8" opacity=".6"/><circle cx="833" cy="373" r="1.8" fill="#c8a8c8" opacity=".6"/><circle cx="842" cy="367" r="1.8" fill="#c8a8c8" opacity=".6"/><circle cx="842" cy="373" r="1.8" fill="#c8a8c8" opacity=".6"/><circle cx="851" cy="367" r="1.8" fill="#c8a8c8" opacity=".6"/><circle cx="851" cy="373" r="1.8" fill="#c8a8c8" opacity=".6"/><circle cx="860" cy="367" r="1.8" fill="#c8a8c8" opacity=".6"/><circle cx="860" cy="373" r="1.8" fill="#c8a8c8" opacity=".6"/><circle cx="869" cy="367" r="1.8" fill="#c8a8c8" opacity=".6"/><circle cx="869" cy="373" r="1.8" fill="#c8a8c8" opacity=".6"/><circle cx="878" cy="367" r="1.8" fill="#c8a8c8" opacity=".6"/><circle cx="878" cy="373" r="1.8" fill="#c8a8c8" opacity=".6"/><circle cx="887" cy="367" r="1.8" fill="#c8a8c8" opacity=".6"/><circle cx="887" cy="373" r="1.8" fill="#c8a8c8" opacity=".6"/><circle cx="896" cy="367" r="1.8" fill="#c8a8c8" opacity=".6"/><circle cx="896" cy="373" r="1.8" fill="#c8a8c8" opacity=".6"/><circle cx="905" cy="367" r="1.8" fill="#c8a8c8" opacity=".6"/><circle cx="905" cy="373" r="1.8" fill="#c8a8c8" opacity=".6"/><circle cx="914" cy="367" r="1.8" fill="#c8a8c8" opacity=".6"/><circle cx="914" cy="373" r="1.8" fill="#c8a8c8" opacity=".6"/><circle cx="923" cy="367" r="1.8" fill="#c8a8c8" opacity=".6"/><circle cx="923" cy="373" r="1.8" fill="#c8a8c8" opacity=".6"/><circle cx="932" cy="367" r="1.8" fill="#c8a8c8" opacity=".6"/><circle cx="932" cy="373" r="1.8" fill="#c8a8c8" opacity=".6"/><circle cx="941" cy="367" r="1.8" fill="#c8a8c8" opacity=".6"/><circle cx="941" cy="373" r="1.8" fill="#c8a8c8" opacity=".6"/><circle cx="950" cy="367" r="1.8" fill="#c8a8c8" opacity=".6"/><circle cx="950" cy="373" r="1.8" fill="#c8a8c8" opacity=".6"/><circle cx="959" cy="367" r="1.8" fill="#c8a8c8" opacity=".6"/><circle cx="959" cy="373" r="1.8" fill="#c8a8c8" opacity=".6"/><circle cx="968" cy="367" r="1.8" fill="#c8a8c8" opacity=".6"/><circle cx="968" cy="373" r="1.8" fill="#c8a8c8" opacity=".6"/><circle cx="977" cy="367" r="1.8" fill="#c8a8c8" opacity=".6"/><circle cx="977" cy="373" r="1.8" fill="#c8a8c8" opacity=".6"/><circle cx="986" cy="367" r="1.8" fill="#c8a8c8" opacity=".6"/><circle cx="986" cy="373" r="1.8" fill="#c8a8c8" opacity=".6"/><circle cx="995" cy="367" r="1.8" fill="#c8a8c8" opacity=".6"/><circle cx="995" cy="373" r="1.8" fill="#c8a8c8" opacity=".6"/><circle cx="1004" cy="367" r="1.8" fill="#c8a8c8" opacity=".6"/><circle cx="1004" cy="373" r="1.8" fill="#c8a8c8" opacity=".6"/><circle cx="1013" cy="367" r="1.8" fill="#c8a8c8" opacity=".6"/><circle cx="1013" cy="373" r="1.8" fill="#c8a8c8" opacity=".6"/><circle cx="1022" cy="367" r="1.8" fill="#c8a8c8" opacity=".6"/><circle cx="1022" cy="373" r="1.8" fill="#c8a8c8" opacity=".6"/><circle cx="1031" cy="367" r="1.8" fill="#c8a8c8" opacity=".6"/><circle cx="1031" cy="373" r="1.8" fill="#c8a8c8" opacity=".6"/><circle cx="1040" cy="367" r="1.8" fill="#c8a8c8" opacity=".6"/><circle cx="1040" cy="373" r="1.8" fill="#c8a8c8" opacity=".6"/><circle cx="1049" cy="367" r="1.8" fill="#c8a8c8" opacity=".6"/><circle cx="1049" cy="373" r="1.8" fill="#c8a8c8" opacity=".6"/><circle cx="1058" cy="367" r="1.8" fill="#c8a8c8" opacity=".6"/><circle cx="1058" cy="373" r="1.8" fill="#c8a8c8" opacity=".6"/><circle cx="1067" cy="367" r="1.8" fill="#c8a8c8" opacity=".6"/><circle cx="1067" cy="373" r="1.8" fill="#c8a8c8" opacity=".6"/><circle cx="1076" cy="367" r="1.8" fill="#c8a8c8" opacity=".6"/><circle cx="1076" cy="373" r="1.8" fill="#c8a8c8" opacity=".6"/><circle cx="1085" cy="367" r="1.8" fill="#c8a8c8" opacity=".6"/><circle cx="1085" cy="373" r="1.8" fill="#c8a8c8" opacity=".6"/><circle cx="1094" cy="367" r="1.8" fill="#c8a8c8" opacity=".6"/><circle cx="1094" cy="373" r="1.8" fill="#c8a8c8" opacity=".6"/><circle cx="1103" cy="367" r="1.8" fill="#c8a8c8" opacity=".6"/><circle cx="1103" cy="373" r="1.8" fill="#c8a8c8" opacity=".6"/><circle cx="1112" cy="367" r="1.8" fill="#c8a8c8" opacity=".6"/><circle cx="1112" cy="373" r="1.8" fill="#c8a8c8" opacity=".6"/><circle cx="1121" cy="367" r="1.8" fill="#c8a8c8" opacity=".6"/><circle cx="1121" cy="373" r="1.8" fill="#c8a8c8" opacity=".6"/><circle cx="1130" cy="367" r="1.8" fill="#c8a8c8" opacity=".6"/><circle cx="1130" cy="373" r="1.8" fill="#c8a8c8" opacity=".6"/><g opacity="1"><path d="M687 408 C689 388 699 382 711 382 C723 382 733 388 735 408Z" fill="#2e2e36"/><path d="M702 383 L709 408 L713 408 L720 383Z" fill="#f4f4f4"/><rect x="706" y="372" width="10" height="12" fill="#8a6a50"/><ellipse cx="711" cy="364" rx="10.5" ry="13" fill="#8a6a50"/><path d="M701 360 C702 349 720 349 721 360 C717 354 705 354 701 360Z" fill="#3a2a20"/></g><g opacity="0.7"><path d="M784 408 C786 388 796 382 808 382 C820 382 830 388 832 408Z" fill="#2e2e36"/><path d="M799 383 L806 408 L810 408 L817 383Z" fill="#f4f4f4"/><rect x="803" y="372" width="10" height="12" fill="#d4bcaa"/><ellipse cx="808" cy="364" rx="10.5" ry="13" fill="#d4bcaa"/><path d="M798 360 C799 349 817 349 818 360 C814 354 802 354 798 360Z" fill="#8a7a70"/></g><g opacity="0.7"><path d="M879 408 C881 388 891 382 903 382 C915 382 925 388 927 408Z" fill="#2e2e36"/><path d="M894 383 L901 408 L905 408 L912 383Z" fill="#f4f4f4"/><rect x="898" y="372" width="10" height="12" fill="#d4bcaa"/><ellipse cx="903" cy="364" rx="10.5" ry="13" fill="#d4bcaa"/><path d="M893 360 C894 349 912 349 913 360 C909 354 897 354 893 360Z" fill="#8a7a70"/></g><g opacity="0.7"><path d="M974 408 C976 388 986 382 998 382 C1010 382 1020 388 1022 408Z" fill="#2e2e36"/><path d="M989 383 L996 408 L1000 408 L1007 383Z" fill="#f4f4f4"/><rect x="993" y="372" width="10" height="12" fill="#d4bcaa"/><ellipse cx="998" cy="364" rx="10.5" ry="13" fill="#d4bcaa"/><path d="M988 360 C989 349 1007 349 1008 360 C1004 354 992 354 988 360Z" fill="#8a7a70"/></g><g opacity="0.7"><path d="M1069 408 C1071 388 1081 382 1093 382 C1105 382 1115 388 1117 408Z" fill="#2e2e36"/><path d="M1084 383 L1091 408 L1095 408 L1102 383Z" fill="#f4f4f4"/><rect x="1088" y="372" width="10" height="12" fill="#d4bcaa"/><ellipse cx="1093" cy="364" rx="10.5" ry="13" fill="#d4bcaa"/><path d="M1083 360 C1084 349 1102 349 1103 360 C1099 354 1087 354 1083 360Z" fill="#8a7a70"/></g><path d="M1152 343 H1622 L1642 368 L1624 392 V397 H1152Z" fill="url(#cy)"/><ellipse cx="1173" cy="373" rx="7" ry="3.5" fill="#f0a050" opacity=".8"/><ellipse cx="1245" cy="361" rx="5" ry="3" fill="#3a7ae0" opacity=".7"/><g opacity="1"><path d="M1176 406 C1178 386 1188 380 1200 380 C1212 380 1222 386 1224 406Z" fill="#2e2e36"/><path d="M1191 381 L1198 406 L1202 406 L1209 381Z" fill="#f4f4f4"/><rect x="1195" y="370" width="10" height="12" fill="#8a6a50"/><ellipse cx="1200" cy="362" rx="10.5" ry="13" fill="#8a6a50"/><path d="M1190 358 C1191 347 1209 347 1210 358 C1206 352 1194 352 1190 358Z" fill="#3a2a20"/></g><ellipse cx="1268" cy="373" rx="7" ry="3.5" fill="#f0a050" opacity=".8"/><ellipse cx="1340" cy="361" rx="5" ry="3" fill="#3a7ae0" opacity=".7"/><g opacity="0.7"><path d="M1271 406 C1273 386 1283 380 1295 380 C1307 380 1317 386 1319 406Z" fill="#2e2e36"/><path d="M1286 381 L1293 406 L1297 406 L1304 381Z" fill="#f4f4f4"/><rect x="1290" y="370" width="10" height="12" fill="#d4bcaa"/><ellipse cx="1295" cy="362" rx="10.5" ry="13" fill="#d4bcaa"/><path d="M1285 358 C1286 347 1304 347 1305 358 C1301 352 1289 352 1285 358Z" fill="#8a7a70"/></g><ellipse cx="1362" cy="373" rx="7" ry="3.5" fill="#f0a050" opacity=".8"/><ellipse cx="1434" cy="361" rx="5" ry="3" fill="#3a7ae0" opacity=".7"/><g opacity="0.7"><path d="M1365 406 C1367 386 1377 380 1389 380 C1401 380 1411 386 1413 406Z" fill="#2e2e36"/><path d="M1380 381 L1387 406 L1391 406 L1398 381Z" fill="#f4f4f4"/><rect x="1384" y="370" width="10" height="12" fill="#d4bcaa"/><ellipse cx="1389" cy="362" rx="10.5" ry="13" fill="#d4bcaa"/><path d="M1379 358 C1380 347 1398 347 1399 358 C1395 352 1383 352 1379 358Z" fill="#8a7a70"/></g><ellipse cx="1457" cy="373" rx="7" ry="3.5" fill="#f0a050" opacity=".8"/><ellipse cx="1529" cy="361" rx="5" ry="3" fill="#3a7ae0" opacity=".7"/><g opacity="0.7"><path d="M1460 406 C1462 386 1472 380 1484 380 C1496 380 1506 386 1508 406Z" fill="#2e2e36"/><path d="M1475 381 L1482 406 L1486 406 L1493 381Z" fill="#f4f4f4"/><rect x="1479" y="370" width="10" height="12" fill="#d4bcaa"/><ellipse cx="1484" cy="362" rx="10.5" ry="13" fill="#d4bcaa"/><path d="M1474 358 C1475 347 1493 347 1494 358 C1490 352 1478 352 1474 358Z" fill="#8a7a70"/></g><ellipse cx="1556" cy="373" rx="7" ry="3.5" fill="#f0a050" opacity=".8"/><ellipse cx="1628" cy="361" rx="5" ry="3" fill="#3a7ae0" opacity=".7"/><g opacity="0.7"><path d="M1559 406 C1561 386 1571 380 1583 380 C1595 380 1605 386 1607 406Z" fill="#2e2e36"/><path d="M1574 381 L1581 406 L1585 406 L1592 381Z" fill="#f4f4f4"/><rect x="1578" y="370" width="10" height="12" fill="#d4bcaa"/><ellipse cx="1583" cy="362" rx="10.5" ry="13" fill="#d4bcaa"/><path d="M1573 358 C1574 347 1592 347 1593 358 C1589 352 1577 352 1573 358Z" fill="#8a7a70"/></g><path d="M662 397.0 L662 382.2 L666 382.8 L670 386.1 L674 385.2 L678 382.2 L682 383.4 L686 383.4 L690 381.8 L694 385.3 L698 384.7 L702 381.3 L706 384.0 L710 381.2 L714 383.4 L718 385.4 L722 385.6 L726 385.0 L730 385.7 L734 381.5 L738 382.1 L742 383.2 L746 382.5 L750 382.9 L754 383.9 L758 385.5 L762 385.6 L766 386.0 L770 381.8 L774 385.8 L778 383.8 L782 382.1 L786 383.9 L790 381.3 L794 389.2 L798 383.1 L802 382.5 L806 388.5 L810 381.2 L814 382.7 L818 385.9 L822 386.0 L826 381.4 L830 381.2 L834 383.0 L838 389.5 L842 382.6 L846 385.5 L850 383.3 L854 384.2 L858 383.8 L862 385.7 L866 383.2 L870 382.2 L874 385.9 L878 387.7 L882 388.5 L886 388.5 L890 383.3 L894 382.8 L898 386.2 L902 384.4 L906 382.3 L910 384.0 L914 382.8 L918 382.8 L922 382.5 L926 388.3 L930 384.7 L934 382.1 L938 382.2 L942 383.2 L946 381.5 L950 382.7 L954 383.2 L958 381.8 L962 384.3 L966 383.3 L970 381.6 L974 382.0 L978 385.2 L982 382.4 L986 384.2 L990 382.7 L994 382.5 L998 382.4 L1002 383.1 L1006 383.0 L1010 389.8 L1014 385.4 L1018 383.2 L1022 385.6 L1026 384.7 L1030 384.3 L1034 382.4 L1038 388.4 L1042 382.4 L1046 381.2 L1050 384.5 L1054 385.5 L1058 389.0 L1062 381.9 L1066 384.3 L1070 383.1 L1074 384.1 L1078 382.3 L1082 383.4 L1086 382.8 L1090 383.7 L1094 381.9 L1098 385.6 L1102 388.5 L1106 387.1 L1110 382.3 L1114 383.1 L1118 386.2 L1122 381.6 L1126 381.3 L1130 388.0 L1134 382.6 L1138 382.8 L1142 383.9 L1146 382.0 L1150 381.6 L1154 384.6 L1158 381.4 L1162 382.9 L1166 384.9 L1170 385.0 L1174 383.2 L1178 383.5 L1182 383.1 L1186 383.3 L1190 383.7 L1194 381.4 L1198 383.1 L1202 385.7 L1206 385.5 L1210 382.3 L1214 381.6 L1218 384.3 L1222 385.0 L1226 384.7 L1230 381.5 L1234 381.0 L1238 386.4 L1242 381.5 L1246 389.4 L1250 381.6 L1254 384.4 L1258 385.8 L1262 389.1 L1266 383.6 L1270 381.5 L1274 387.3 L1278 383.8 L1282 382.2 L1286 382.2 L1290 384.8 L1294 382.8 L1298 382.8 L1302 381.4 L1306 385.9 L1310 384.7 L1314 384.5 L1318 384.4 L1322 383.4 L1326 385.5 L1330 381.5 L1334 385.6 L1338 383.2 L1342 381.9 L1346 382.0 L1350 382.6 L1354 384.5 L1358 382.5 L1362 383.1 L1366 383.9 L1370 387.9 L1374 382.9 L1378 382.8 L1382 384.9 L1386 386.0 L1390 384.0 L1394 385.2 L1398 383.8 L1402 384.6 L1406 383.0 L1410 385.8 L1414 382.1 L1418 384.6 L1422 385.8 L1426 382.2 L1430 382.3 L1434 384.5 L1438 385.5 L1442 385.3 L1446 383.1 L1450 389.3 L1454 382.5 L1458 383.9 L1462 381.0 L1466 383.2 L1470 382.1 L1474 385.8 L1478 387.1 L1482 389.5 L1486 389.8 L1490 382.9 L1494 384.8 L1498 384.4 L1502 385.0 L1506 384.8 L1510 384.4 L1514 381.6 L1518 382.8 L1522 384.4 L1526 381.9 L1530 384.2 L1534 385.4 L1538 381.6 L1542 381.7 L1546 384.6 L1550 383.8 L1554 383.3 L1558 388.9 L1562 384.8 L1566 384.7 L1570 382.3 L1574 388.0 L1578 382.2 L1582 382.8 L1586 383.0 L1590 384.9 L1594 387.1 L1598 389.1 L1602 384.6 L1606 381.9 L1610 384.7 L1614 384.7 L1618 381.7 L1622 382.0 L1624 397.0Z" fill="#6a6a6e" opacity=".85"/><path d="M1624 382 L1642 368 L1624 392Z" fill="#c8eef8"/><rect x="662" y="343" width="9" height="54" fill="#2a2a30"/><rect x="664" y="346.0" width="5.5" height="5" rx="1" fill="#f4f4f4"/><rect x="664" y="354.5" width="5.5" height="5" rx="1" fill="#f4f4f4"/><rect x="664" y="363.0" width="5.5" height="5" rx="1" fill="#f4f4f4"/><rect x="664" y="371.5" width="5.5" height="5" rx="1" fill="#f4f4f4"/><rect x="664" y="380.0" width="5.5" height="5" rx="1" fill="#f4f4f4"/><rect x="664" y="388.5" width="5.5" height="5" rx="1" fill="#f4f4f4"/><rect x="1134" y="343" width="9" height="54" fill="#2a2a30"/><rect x="1136" y="346.0" width="5.5" height="5" rx="1" fill="#f4f4f4"/><rect x="1136" y="354.5" width="5.5" height="5" rx="1" fill="#f4f4f4"/><rect x="1136" y="363.0" width="5.5" height="5" rx="1" fill="#f4f4f4"/><rect x="1136" y="371.5" width="5.5" height="5" rx="1" fill="#f4f4f4"/><rect x="1136" y="380.0" width="5.5" height="5" rx="1" fill="#f4f4f4"/><rect x="1136" y="388.5" width="5.5" height="5" rx="1" fill="#f4f4f4"/><rect x="1143" y="343" width="9" height="54" fill="#2a2a30"/><rect x="1145" y="346.0" width="5.5" height="5" rx="1" fill="#f4f4f4"/><rect x="1145" y="354.5" width="5.5" height="5" rx="1" fill="#f4f4f4"/><rect x="1145" y="363.0" width="5.5" height="5" rx="1" fill="#f4f4f4"/><rect x="1145" y="371.5" width="5.5" height="5" rx="1" fill="#f4f4f4"/><rect x="1145" y="380.0" width="5.5" height="5" rx="1" fill="#f4f4f4"/><rect x="1145" y="388.5" width="5.5" height="5" rx="1" fill="#f4f4f4"/></g></g><g filter="url(#bl)"><g clip-path="url(#c2)"><rect x="662" y="437" width="279" height="54" fill="url(#cy)"/><ellipse cx="690" cy="469" rx="7" ry="3.5" fill="#f0a050" opacity=".8"/><ellipse cx="761" cy="456" rx="5" ry="3" fill="#3a7ae0" opacity=".7"/><g opacity="0.85"><path d="M692 501 C694 481 704 475 716 475 C728 475 738 481 740 501Z" fill="#2e2e36"/><path d="M707 476 L714 501 L718 501 L725 476Z" fill="#f4f4f4"/><rect x="711" y="465" width="10" height="12" fill="#d4bcaa"/><ellipse cx="716" cy="457" rx="10.5" ry="13" fill="#d4bcaa"/><path d="M706 453 C707 442 725 442 726 453 C722 447 710 447 706 453Z" fill="#8a7a70"/></g><ellipse cx="787" cy="469" rx="7" ry="3.5" fill="#f0a050" opacity=".8"/><ellipse cx="858" cy="456" rx="5" ry="3" fill="#3a7ae0" opacity=".7"/><g opacity="0.85"><path d="M789 501 C791 481 801 475 813 475 C825 475 835 481 837 501Z" fill="#2e2e36"/><path d="M804 476 L811 501 L815 501 L822 476Z" fill="#f4f4f4"/><rect x="808" y="465" width="10" height="12" fill="#d4bcaa"/><ellipse cx="813" cy="457" rx="10.5" ry="13" fill="#d4bcaa"/><path d="M803 453 C804 442 822 442 823 453 C819 447 807 447 803 453Z" fill="#8a7a70"/></g><ellipse cx="884" cy="469" rx="7" ry="3.5" fill="#f0a050" opacity=".8"/><ellipse cx="955" cy="456" rx="5" ry="3" fill="#3a7ae0" opacity=".7"/><g opacity="0.85"><path d="M886 501 C888 481 898 475 910 475 C922 475 932 481 934 501Z" fill="#2e2e36"/><path d="M901 476 L908 501 L912 501 L919 476Z" fill="#f4f4f4"/><rect x="905" y="465" width="10" height="12" fill="#d4bcaa"/><ellipse cx="910" cy="457" rx="10.5" ry="13" fill="#d4bcaa"/><path d="M900 453 C901 442 919 442 920 453 C916 447 904 447 900 453Z" fill="#8a7a70"/></g><path d="M662 491.0 L662 477.8 L666 476.3 L670 475.2 L674 479.5 L678 476.9 L682 477.9 L686 479.9 L690 476.5 L694 477.4 L698 483.1 L702 478.3 L706 477.6 L710 476.0 L714 475.2 L718 478.2 L722 477.8 L726 479.5 L730 479.0 L734 475.3 L738 482.2 L742 479.6 L746 479.4 L750 475.7 L754 478.0 L758 478.6 L762 476.7 L766 479.7 L770 477.2 L774 480.2 L778 475.4 L782 475.8 L786 478.5 L790 477.1 L794 476.5 L798 478.8 L802 475.9 L806 478.6 L810 476.9 L814 478.0 L818 475.0 L822 478.9 L826 477.3 L830 476.0 L834 477.0 L838 480.7 L842 480.1 L846 477.2 L850 481.6 L854 483.9 L858 481.9 L862 475.8 L866 476.7 L870 475.3 L874 476.4 L878 477.3 L882 476.5 L886 476.3 L890 478.1 L894 475.5 L898 479.8 L902 480.4 L906 480.2 L910 478.3 L914 476.0 L918 477.4 L922 479.6 L926 475.2 L930 478.0 L934 475.4 L938 481.6 L941 491.0Z" fill="#6a6a6e" opacity=".82"/><path d="M662 442 L679 461 L662 480Z" fill="#fff"/></g><rect x="941" y="437" width="9" height="54" fill="#2a2a30"/><rect x="943" y="440.0" width="5.5" height="5" rx="1" fill="#f4f4f4"/><rect x="943" y="448.5" width="5.5" height="5" rx="1" fill="#f4f4f4"/><rect x="943" y="457.0" width="5.5" height="5" rx="1" fill="#f4f4f4"/><rect x="943" y="465.5" width="5.5" height="5" rx="1" fill="#f4f4f4"/><rect x="943" y="474.0" width="5.5" height="5" rx="1" fill="#f4f4f4"/><rect x="943" y="482.5" width="5.5" height="5" rx="1" fill="#f4f4f4"/><rect x="955" y="437" width="573" height="55" fill="#7ab8dc"/><defs><linearGradient id="fb1" x1="0" y1="0" x2="1" y2="0"><stop offset="0" stop-color="#3c84c0"/><stop offset="1" stop-color="#78b4dc"/></linearGradient><linearGradient id="fb2" x1="0" y1="0" x2="1" y2="0"><stop offset="0" stop-color="#9cc8e6"/><stop offset="1" stop-color="#bcdaee"/></linearGradient></defs><rect x="958" y="442" width="82" height="44" fill="url(#fb1)"/><rect x="1040" y="442" width="8" height="44" fill="#0a0a0a"/><rect x="1048" y="442" width="7" height="44" fill="#6a6a6a"/><rect x="1055" y="442" width="82" height="44" fill="url(#fb2)"/><g opacity="1"><ellipse cx="978" cy="452" rx="16" ry="5" fill="#5a5840" transform="rotate(-12 978 452)"/><ellipse cx="976" cy="458" rx="15" ry="5" fill="#c8c2a0" transform="rotate(-10 976 458)"/><ellipse cx="990" cy="468" rx="22" ry="6" fill="#c8c2a0" transform="rotate(-18 990 468)"/><ellipse cx="1000" cy="462" rx="14" ry="4" fill="#5a5840" transform="rotate(-15 1000 462)"/><ellipse cx="1006" cy="470" rx="12" ry="5" fill="#c8c2a0" transform="rotate(-20 1006 470)"/><path d="M963 474 L974 466" stroke="#2a3a40" stroke-width="3"/></g><g opacity="0.6"><ellipse cx="1075" cy="452" rx="16" ry="5" fill="#9a98a0" transform="rotate(-12 1075 452)"/><ellipse cx="1073" cy="458" rx="15" ry="5" fill="#d8d4c8" transform="rotate(-10 1073 458)"/><ellipse cx="1087" cy="468" rx="22" ry="6" fill="#d8d4c8" transform="rotate(-18 1087 468)"/><ellipse cx="1097" cy="462" rx="14" ry="4" fill="#9a98a0" transform="rotate(-15 1097 462)"/><ellipse cx="1103" cy="470" rx="12" ry="5" fill="#d8d4c8" transform="rotate(-20 1103 470)"/><path d="M1060 474 L1071 466" stroke="#2a3a40" stroke-width="3"/></g><rect x="1148" y="443" width="92" height="44" fill="#0a0408"/><rect x="1240" y="443" width="91" height="44" fill="#5e5a62"/><g opacity="1"><ellipse cx="1162" cy="457" rx="9" ry="7" fill="#c8b8f0" opacity=".75"/><path d="M1158 462 C1162 452 1178 450 1188 456 C1194 462 1195 472 1194 478 L1170 482 L1166 476Z" fill="#e8e0c8"/><path d="M1178 464 L1193 462 L1192 476 L1176 477Z" fill="#3a2a20"/><path d="M1168 480 L1195 476" stroke="#d8c898" stroke-width="3"/><circle cx="1176" cy="458" r="1.8" fill="#5a5040"/><circle cx="1186" cy="456" r="1.6" fill="#5a5040"/></g><g opacity="0.85"><ellipse cx="1254" cy="457" rx="9" ry="7" fill="#c8b8f0" opacity=".75"/><path d="M1250 462 C1254 452 1270 450 1280 456 C1286 462 1287 472 1286 478 L1262 482 L1258 476Z" fill="#e8e0c8"/><path d="M1270 464 L1285 462 L1284 476 L1268 477Z" fill="#6a6058"/><path d="M1260 480 L1287 476" stroke="#d8c898" stroke-width="3"/><circle cx="1268" cy="458" r="1.8" fill="#5a5040"/><circle cx="1278" cy="456" r="1.6" fill="#5a5040"/></g><rect x="1341" y="443" width="91" height="44" fill="#cbcacc"/><rect x="1432" y="443" width="92" height="44" fill="#dedde0"/></g><rect x="951" y="432" width="4" height="66" fill="#111"/></svg>
<!-- status bar -->
<div class="a" style="left:139px;top:978px;width:1621px;height:47px;background:#e9edf6;border-top:1px solid #d8dde8"></div>
<div class="t" style="left:154px;top:996px;font-size:14.8px;color:#7a8aa6">3 elementos seleccionados</div>
<svg style="left:1519px;top:989px" width="26" height="24" viewBox="0 0 26 24"><rect x="10" y="1" width="14" height="12" fill="#e8f0f8" stroke="#8aa0b8"/><path d="M14 7 H20 M17 4 V10" stroke="#3a7ac8" stroke-width="1.5"/><rect x="1" y="8" width="18" height="15" fill="#3a7ab0" stroke="#6a8aa8"/><path d="M1 18 C6 14 12 16 19 19 V23 H1Z" fill="#2a5a70"/><rect x="3" y="10" width="14" height="4" fill="#bcd8ec"/></svg>
<div class="a" style="left:1556px;top:986px;width:1px;height:30px;background:#d0d4dc"></div>
<div class="a" style="left:1564px;top:991px;width:20px;height:20px;border-radius:50%;background:linear-gradient(#fdfdfe,#dfe3ea);border:1px solid #b8c0cc"></div>
<div class="a" style="left:1569px;top:1000px;width:10px;height:2px;background:#7a8aa0"></div>
<div class="a" style="left:1591px;top:998px;width:60px;height:5px;border-radius:2px;background:#3a78cc"></div>
<div class="a" style="left:1651px;top:999px;width:67px;height:2px;background:#c8ccd4"></div>
<div class="a" style="left:1645px;top:990px;width:12px;height:21px;border-radius:4px 4px 6px 6px;background:linear-gradient(90deg,#f4f6f8,#d8dce2);border:1px solid #a0a8b4"></div>
<div class="a" style="left:1723px;top:990px;width:21px;height:21px;border-radius:50%;background:linear-gradient(#fdfdfe,#dfe3ea);border:1px solid #b8c0cc"></div>
<svg style="left:1727px;top:994px" width="13" height="13" viewBox="0 0 13 13"><path d="M6.5 1.5 V11.5 M1.5 6.5 H11.5" stroke="#2a70c8" stroke-width="2"/></svg>
<!-- themes gallery -->
<div class="a" style="left:688px;top:221px;width:384px;height:75px;background:#fafafb;border:1px solid #ececf0"></div>
<div class="a" style="left:691px;top:223px;width:90px;height:70px;background:#d3e3f6;border:1px solid #a9c9ee"></div>
<svg width="0" height="0" style="left:0;top:0"><defs><linearGradient id="sky" x1="0" y1="0" x2="0" y2="1"><stop offset="0" stop-color="#2f74d6"/><stop offset=".28" stop-color="#7cb8e8"/><stop offset=".55" stop-color="#d6ecf8"/><stop offset=".8" stop-color="#e6f4f8"/></linearGradient><linearGradient id="wat" x1="0" y1="0" x2="1" y2="0"><stop offset="0" stop-color="#2c5c98"/><stop offset=".6" stop-color="#4a78b0"/><stop offset="1" stop-color="#9ab4d0"/></linearGradient><linearGradient id="mtn" x1="0" y1="0" x2="0" y2="1"><stop offset="0" stop-color="#4a9070"/><stop offset="1" stop-color="#1f5a3c"/></linearGradient><filter id="tb"><feGaussianBlur stdDeviation=".9"/></filter><g id="land"><g filter="url(#tb)"><rect x="-2" y="-2" width="84" height="64" fill="url(#sky)"/><ellipse cx="62" cy="12" rx="18" ry="9" fill="#f4fafc" opacity=".55"/><ellipse cx="18" cy="24" rx="22" ry="6" fill="#f4fafc" opacity=".6"/><ellipse cx="50" cy="30" rx="28" ry="7" fill="#f4fafc" opacity=".5"/><path d="M-2 23 L12 22 C22 26 30 34 38 40 C52 38 64 42 82 48 V62 H-2Z" fill="url(#mtn)"/><rect x="-2" y="46" width="84" height="16" fill="url(#wat)"/></g></g></defs></svg>
<div class="a" style="left:698px;top:229px;width:77px;height:59px;border:3px solid #fff;box-shadow:0 0 0 1px #c8ccd2;overflow:hidden"><svg style="left:0;top:0" width="71" height="53" viewBox="0 0 80 60" preserveAspectRatio="none"><use href="#land"/></svg></div>
<div class="a" style="left:787px;top:228px;width:79px;height:60px;border:3px solid #fff;box-shadow:0 0 0 1px #c8ccd2;overflow:hidden"><svg style="left:0;top:0" width="73" height="54" viewBox="0 0 80 60" preserveAspectRatio="none"><use href="#land"/><rect x="0" y="26" width="80" height="4" fill="#8a9a88"/><rect x="0" y="30" width="80" height="9" fill="#3cc6da"/></svg></div>
<div class="a" style="left:877px;top:228px;width:79px;height:60px;border:3px solid #fff;box-shadow:0 0 0 1px #c8ccd2;overflow:hidden"><svg style="left:0;top:0" width="73" height="54" viewBox="0 0 80 60" preserveAspectRatio="none"><use href="#land"/><path d="M62 0 H80 V60 H50 C60 40 62 20 62 0Z" fill="#b8b8bc" opacity=".9"/></svg></div>
<div class="a" style="left:967px;top:228px;width:81px;height:60px;border:3px solid #fff;box-shadow:0 0 0 1px #c8ccd2;overflow:hidden;background:#e4e8ee"><svg style="left:0;top:0" width="75" height="54" viewBox="0 0 80 60" preserveAspectRatio="none"><g opacity=".45"><use href="#land"/></g><rect x="0" y="0" width="80" height="60" fill="#fff" opacity=".35"/><g transform="translate(12,10) scale(.82,.8)"><use href="#land"/></g></svg></div>
<svg style="left:1057px;top:230px" width="10" height="60" viewBox="0 0 10 60"><circle cx="5" cy="5" r="1" fill="#ccc"/><path d="M2 26 H8 L5 30Z" fill="#555"/><path d="M2 47 H8" stroke="#555" stroke-width="1.3"/><path d="M2 50 H8 L5 55Z" fill="#555"/></svg>
<!-- edicion -->
<svg style="left:1094px;top:224px" width="44" height="34" viewBox="0 0 44 34"><path d="M20 3 L20 33 L2 33Z" fill="#1f74c8"/><path d="M22 13 L22 33 L41 33Z" fill="#9aa0a8"/><path d="M26 10 C27 4 33 2 38 7" fill="none" stroke="#2a84d4" stroke-width="2.5"/><path d="M23 6 L29 4 L28 12Z" fill="#2a84d4"/></svg>
<svg style="left:1152px;top:224px" width="44" height="34" viewBox="0 0 44 34"><path d="M24 3 L24 33 L42 33Z" fill="#1f74c8"/><path d="M22 13 L22 33 L3 33Z" fill="#9aa0a8"/><path d="M18 10 C17 4 11 2 6 7" fill="none" stroke="#2a84d4" stroke-width="2.5"/><path d="M21 6 L15 4 L16 12Z" fill="#2a84d4"/></svg>
<div class="t rb" style="left:1089px;top:268px;font-size:13px;color:#444">Girar a la</div>
<div class="t rb" style="left:1089px;top:284px;font-size:13px;color:#444">izquierda</div>
<div class="t rb" style="left:1148px;top:268px;font-size:13px;color:#444">Girar a la</div>
<div class="t rb" style="left:1151px;top:284px;font-size:13px;color:#444">derecha</div>
<svg style="left:1208px;top:232px" width="17" height="17" viewBox="0 0 17 17"><path d="M2 2 L15 15 M15 2 L2 15" stroke="#d8282a" stroke-width="2.6"/></svg>
<div class="t rb" style="left:1231px;top:235px;font-size:13px;color:#444">Quitar</div>
<svg style="left:1209px;top:268px" width="18" height="18" viewBox="0 0 18 18"><rect x="1" y="1" width="16" height="16" fill="#b8d8f4" stroke="#8aaad0" stroke-dasharray="2 1"/></svg>
<div class="t rb" style="left:1231px;top:271px;font-size:13px;color:#444">Seleccionar todo</div>
<!-- compartir -->
<div class="a" style="left:1346px;top:223px;width:230px;height:73px;background:#fafafb;border:1px solid #ececf0"></div>
<div class="a" style="left:1352px;top:230px;width:61px;height:60px;background:#0c4db3"></div>
<svg style="left:1357px;top:240px" width="50" height="36" viewBox="0 0 50 36"><path d="M14 22 C13 14 20 8 27 11 C31 4 43 5 44 15 C49 16 50 22 47 24 Z" fill="#fff"/><path d="M9 31 C2 31 1 22 7 21 C8 14 16 12 20 16 C23 9 34 9 36 18 C42 18 45 24 43 28 C42 30 40 31 38 31Z" fill="#fff" stroke="#0c4db3" stroke-width="2"/></svg>
<div class="a" style="left:1422px;top:230px;width:61px;height:60px;background:#3a5a9c"></div>
<div class="a" style="left:1426px;top:271px;width:54px;height:10px;background:#5a78b8"></div>
<svg style="left:1422px;top:230px" width="61" height="60" viewBox="0 0 61 60"><path d="M33 60 V34 H26 V25 H33 V18 C33 10 37 6 45 6 C48 6 50 6.5 51 7 V15 H46 C43 15 42 16.5 42 19 V25 H51 L50 34 H42 V60Z" fill="#fff"/></svg>
<div class="t" style="left:1506px;top:230px;font-size:24px;font-weight:bold;color:#222;letter-spacing:-1px;transform:scaleX(.85);transform-origin:left">You</div>
<div class="a" style="left:1500px;top:256px;width:46px;height:31px;border-radius:6px;background:#d62a2a"></div>
<div class="t" style="left:1502px;top:259px;font-size:24px;font-weight:bold;color:#fff;letter-spacing:-1px;transform:scaleX(.8);transform-origin:left">Tube</div>
<svg style="left:1563px;top:232px" width="10" height="60" viewBox="0 0 10 60"><circle cx="5" cy="5" r="1" fill="#ccc"/><path d="M2 25 H8 L5 29Z" fill="#555"/><path d="M2 47 H8" stroke="#555" stroke-width="1.3"/><path d="M2 50 H8 L5 55Z" fill="#555"/></svg>
<svg style="left:1594px;top:222px" width="38" height="37" viewBox="0 0 38 37"><path d="M3 2 H22 L28 8 V35 H3Z" fill="#f4f6f8" stroke="#a0a8b0"/><rect x="6" y="10" width="19" height="18" fill="#4a7ab0"/><circle cx="12" cy="16" r="3" fill="#8ad0f0"/><path d="M6 28 L14 20 L25 28Z" fill="#2a5a3a"/><path d="M22 18 L36 32" stroke="#444" stroke-width="3"/></svg>
<div class="t rb" style="left:1585px;top:267px;font-size:13px;color:#444">Guardar</div>
<div class="t rb" style="left:1582px;top:284px;font-size:13px;color:#444">película</div>
<svg style="left:1629px;top:288px" width="7" height="5" viewBox="0 0 7 5"><path d="M0 0 H7 L3.5 4Z" fill="#333"/></svg>
<svg style="left:1656px;top:221px" width="41" height="40" viewBox="0 0 41 40"><rect x="1" y="1" width="39" height="38" rx="2" fill="#9aa8a8" stroke="#7a8a8a"/><rect x="4" y="4" width="33" height="32" fill="#c8d2d4"/><circle cx="20.5" cy="13" r="5" fill="#e8eeee"/><path d="M11 32 C11 22 30 22 30 32Z" fill="#e8eeee"/></svg>
<div class="t rb" style="left:1658px;top:267px;font-size:13px;color:#444">Iniciar</div>
<div class="t rb" style="left:1656px;top:284px;font-size:13px;color:#444">sesión</div>


<svg style="left:1122px;top:779px" width="16" height="24" viewBox="0 0 16 24"><path d="M2.5 2.5 L2.5 18.5 L6.5 15 L9.5 21 L12 20 L9 14 L14 13.5Z" fill="#fff" stroke="#5a5a5a" stroke-width="1.4" stroke-linejoin="round"/></svg>
<!-- notification bar -->
<div class="a" style="left:587px;top:1017px;width:749px;height:54px;background:#fff;border:1px solid #e2e2e2;box-shadow:0 1px 3px rgba(0,0,0,.12)"></div>
<div class="a" style="left:601px;top:1037px;width:2px;height:14px;background:#d0d0d0"></div>
<div class="a" style="left:606px;top:1037px;width:2px;height:14px;background:#d0d0d0"></div>
<div class="t" style="left:620px;top:1037px;font-size:14.8px;color:#505050">Screencastify - Screen Video Recorder está compartiendo tu pantalla.</div>
<div class="a" style="left:1091px;top:1024px;width:169px;height:40px;border-radius:4px;background:#1b74e6"></div>
<div class="t" style="left:1091px;top:1036px;width:169px;text-align:center;font-size:15.5px;color:#fff;-webkit-text-stroke:.3px #fff">Dejar de compartir</div>
<div class="t" style="left:1272px;top:1037px;font-size:15px;color:#7f9ac8">Ocultar</div>
<div class="a" style="left:0;top:1077px;width:1920px;height:3px;background:#505050"></div>
<div class="a" style="left:0;top:48px;width:3px;height:1032px;background:#4a4a4a"></div>
<div class="a" style="left:1916px;top:48px;width:4px;height:1032px;background:#4a4a4a"></div>
</body></html>
